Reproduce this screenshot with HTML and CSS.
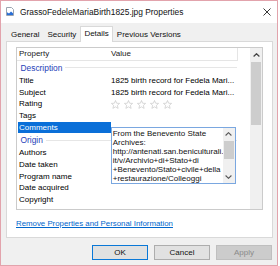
FILE: index.html
```html
<!DOCTYPE html>
<html lang="en">
<head>
    <meta charset="UTF-8">
    <title>GrassoFedeleMariaBirth1825.jpg Properties</title>
    <link rel="stylesheet" href="styles.css">
</head>
<body>
    <div class="window">
        <div class="titlebar">
            <svg class="file-icon" width="8" height="9" viewBox="0 0 8 9">
                <path d="M0.5 0.5h5l2 2v6h-7z" fill="#fff" stroke="#9aa4b0"/>
                <path d="M1 8 V5.2 L3 6.6 L5 4.4 L7 6.2 V8z" fill="#2a6fd6"/>
            </svg>
            <span class="title">GrassoFedeleMariaBirth1825.jpg Properties</span>
            <svg class="close" width="8" height="8" viewBox="0 0 8 8">
                <path d="M0.5 0.5l7 7M7.5 0.5l-7 7" stroke="#222" stroke-width="0.9"/>
            </svg>
        </div>

        <div class="tabs">
            <div class="tab">General</div>
            <div class="tab">Security</div>
            <div class="tab active">Details</div>
            <div class="tab">Previous Versions</div>
        </div>

        <div class="panel">
            <div class="listbox">
                <div class="list">
                    <div class="header">
                        <span class="name">Property</span>
                        <span class="value">Value</span>
                    </div>
                    <div class="group">Description</div>
                    <div class="row"><span class="name">Title</span><span class="value">1825 birth record for Fedela Mari...</span></div>
                    <div class="row"><span class="name">Subject</span><span class="value">1825 birth record for Fedela Mari...</span></div>
                    <div class="row">
                        <span class="name">Rating</span>
                        <span class="value stars">
                            <svg width="9" height="9" viewBox="0 0 10 10"><path class="star" d="M5 0.6L6.3 3.6L9.5 3.8L7.1 6L7.9 9.3L5 7.6L2.1 9.3L2.9 6L0.5 3.8L3.7 3.6z"/></svg>
                            <svg width="9" height="9" viewBox="0 0 10 10"><path class="star" d="M5 0.6L6.3 3.6L9.5 3.8L7.1 6L7.9 9.3L5 7.6L2.1 9.3L2.9 6L0.5 3.8L3.7 3.6z"/></svg>
                            <svg width="9" height="9" viewBox="0 0 10 10"><path class="star" d="M5 0.6L6.3 3.6L9.5 3.8L7.1 6L7.9 9.3L5 7.6L2.1 9.3L2.9 6L0.5 3.8L3.7 3.6z"/></svg>
                            <svg width="9" height="9" viewBox="0 0 10 10"><path class="star" d="M5 0.6L6.3 3.6L9.5 3.8L7.1 6L7.9 9.3L5 7.6L2.1 9.3L2.9 6L0.5 3.8L3.7 3.6z"/></svg>
                            <svg width="9" height="9" viewBox="0 0 10 10"><path class="star" d="M5 0.6L6.3 3.6L9.5 3.8L7.1 6L7.9 9.3L5 7.6L2.1 9.3L2.9 6L0.5 3.8L3.7 3.6z"/></svg>
                        </span>
                    </div>
                    <div class="row"><span class="name">Tags</span><span class="value"></span></div>
                    <div class="row">
                        <span class="name selected">Comments</span>
                        <span class="value">
                            <div class="comment-box">
                                <div class="comment-text">From the Benevento State<br>Archives:<br>http://antenati.san.beniculturali.<br>it/v/Archivio+di+Stato+di<br>+Benevento/Stato+civile+della<br>+restaurazione/Colleoggi</div>
                                <div class="mini-scroll">
                                    <div class="arrow"><svg width="7" height="4" viewBox="0 0 7 4"><path d="M0.6 3.5L3.5 0.7L6.4 3.5" fill="none" stroke="#555" stroke-width="1.1"/></svg></div>
                                    <div class="mini-thumb"></div>
                                    <div class="spacer"></div>
                                    <div class="arrow"><svg width="7" height="4" viewBox="0 0 7 4"><path d="M0.6 0.5L3.5 3.3L6.4 0.5" fill="none" stroke="#555" stroke-width="1.1"/></svg></div>
                                </div>
                            </div>
                        </span>
                    </div>
                    <div class="group origin">Origin</div>
                    <div class="row"><span class="name">Authors</span><span class="value"></span></div>
                    <div class="row"><span class="name">Date taken</span><span class="value"></span></div>
                    <div class="row"><span class="name">Program name</span><span class="value"></span></div>
                    <div class="row"><span class="name">Date acquired</span><span class="value"></span></div>
                    <div class="row"><span class="name">Copyright</span><span class="value"></span></div>
                </div>
                <div class="vscroll">
                    <div class="arrow-up"><svg width="7" height="4" viewBox="0 0 7 4"><path d="M0.6 3.5L3.5 0.7L6.4 3.5" fill="none" stroke="#444" stroke-width="1.2"/></svg></div>
                    <div class="thumb"></div>
                </div>
            </div>
            <a class="remove-link" href="#">Remove Properties and Personal Information</a>
        </div>

        <div class="buttons">
            <button class="btn default">OK</button>
            <button class="btn">Cancel</button>
            <button class="btn disabled">Apply</button>
        </div>
    </div>
</body>
</html>
```

FILE: styles.css
```css
:root {
    --panel-border: #d9d9d9;
    --track: #f0f0f0;
    --thumb: #cdcdcd;
    --group-blue: #1f42b8;
    --font-ui: 'Liberation Sans', Arial, sans-serif;
}

body {
    margin: 0;
    background: #fff;
}

.window {
    width: 278px;
    height: 266px;
    box-sizing: border-box;
    border: 1px solid #e2a3ac;
    background: #f0f0f0;
    display: flex;
    flex-direction: column;
    font-family: var(--font-ui);
    font-size: 8px;
    color: #000;
}

/* title bar */
.titlebar {
    height: 22px;
    flex: none;
    background: #fff;
    display: flex;
    align-items: center;
    padding: 0 6px 1px 5px;
    box-sizing: border-box;
}

.title {
    margin-left: 6px;
    font-size: 8.4px;
    color: #111;
}

.close {
    margin-left: auto;
}

/* tabs */
.tabs {
    height: 18px;
    flex: none;
    display: flex;
    align-items: flex-end;
    padding-left: 6px;
}

.tab {
    height: 13px;
    line-height: 13px;
    padding: 0 4px;
    color: #111;
}

.tab.active {
    height: 15px;
    line-height: 13px;
    padding: 0 3px;
    background: #fff;
    border: 1px solid var(--panel-border);
    border-bottom: none;
    margin-bottom: -1px;
    position: relative;
    z-index: 1;
}

/* panel */
.panel {
    height: 197px;
    flex: none;
    box-sizing: border-box;
    margin: 0 4px 0 5px;
    background: #fff;
    border: 1px solid var(--panel-border);
    padding: 5px 0 0 9px;
}

.listbox {
    width: 247px;
    height: 163px;
    box-sizing: border-box;
    border: 1px solid #cbcbcb;
    display: flex;
}

.list {
    flex: 1;
}

.header {
    height: 13px;
    width: 221px;
    box-sizing: border-box;
    display: flex;
    align-items: center;
    border-bottom: 1px solid #e5e5e5;
    border-right: 1px solid #e5e5e5;
    color: #222;
}

.row {
    height: 11.7px;
    display: flex;
    align-items: center;
}

.name {
    width: 94px;
    flex: none;
    box-sizing: border-box;
    padding-left: 2px;
    line-height: 11.7px;
}

.header .name {
    line-height: 12px;
}

.name.selected {
    margin-left: 1px;
    width: 93px;
    padding-left: 1px;
    background: #0a6fd8;
    color: #fff;
}

.value {
    flex: 1;
    position: relative;
    line-height: 11.7px;
}

.group {
    height: 13.85px;
    display: flex;
    align-items: center;
    padding-left: 3.5px;
    margin-right: 13px;
    color: var(--group-blue);
    font-size: 8.4px;
}

.group.origin {
    height: 14.1px;
}

.group::after {
    content: "";
    flex: 1;
    height: 1px;
    background: #e6e6e6;
    margin-left: 3px;
}

.stars {
    display: flex;
    gap: 3.9px;
    height: 11.7px;
    align-items: center;
}

.star {
    fill: none;
    stroke: #c8c8c8;
    stroke-width: 0.8;
    stroke-linejoin: round;
}

/* comments editor sits over the rows below it */
.comment-box {
    position: absolute;
    top: -0.6px;
    left: -0.3px;
    width: 125px;
    height: 57px;
    box-sizing: border-box;
    border: 1px solid #7aa7e0;
    background: #fff;
    display: flex;
    z-index: 2;
}

.comment-text {
    flex: 1;
    padding: 2.5px 0 0 1px;
    line-height: 8.9px;
    white-space: nowrap;
    overflow: hidden;
    color: #111;
}

.mini-scroll {
    width: 12px;
    flex: none;
    background: var(--track);
    display: flex;
    flex-direction: column;
}

.mini-scroll .arrow {
    height: 12px;
    display: flex;
    align-items: center;
    justify-content: center;
}

.mini-thumb {
    height: 18px;
    margin: 1px 1px 0;
    background: var(--thumb);
}

.spacer {
    flex: 1;
}

.vscroll {
    width: 12px;
    flex: none;
    background: var(--track);
}

.arrow-up {
    height: 13px;
    display: flex;
    align-items: center;
    justify-content: center;
}

.thumb {
    height: 63px;
    margin: 1px 1px 0;
    background: var(--thumb);
}

.remove-link {
    display: inline-block;
    margin-top: 8.5px;
    font-size: 7.85px;
    line-height: 9px;
    color: #0066cc;
}

/* dialog buttons */
.buttons {
    margin-top: 7px;
    display: flex;
    justify-content: flex-end;
    gap: 6px;
    padding-right: 5px;
}

.btn {
    width: 56px;
    height: 15px;
    padding: 0;
    box-sizing: border-box;
    font-family: var(--font-ui);
    font-size: 8px;
    color: #111;
    background: #e1e1e1;
    border: 1px solid #adadad;
}

.btn.default {
    border-color: #0a78d7;
}

.btn.disabled {
    background: #cccccc;
    border-color: #bfbfbf;
    color: #8a8a8a;
}
```
